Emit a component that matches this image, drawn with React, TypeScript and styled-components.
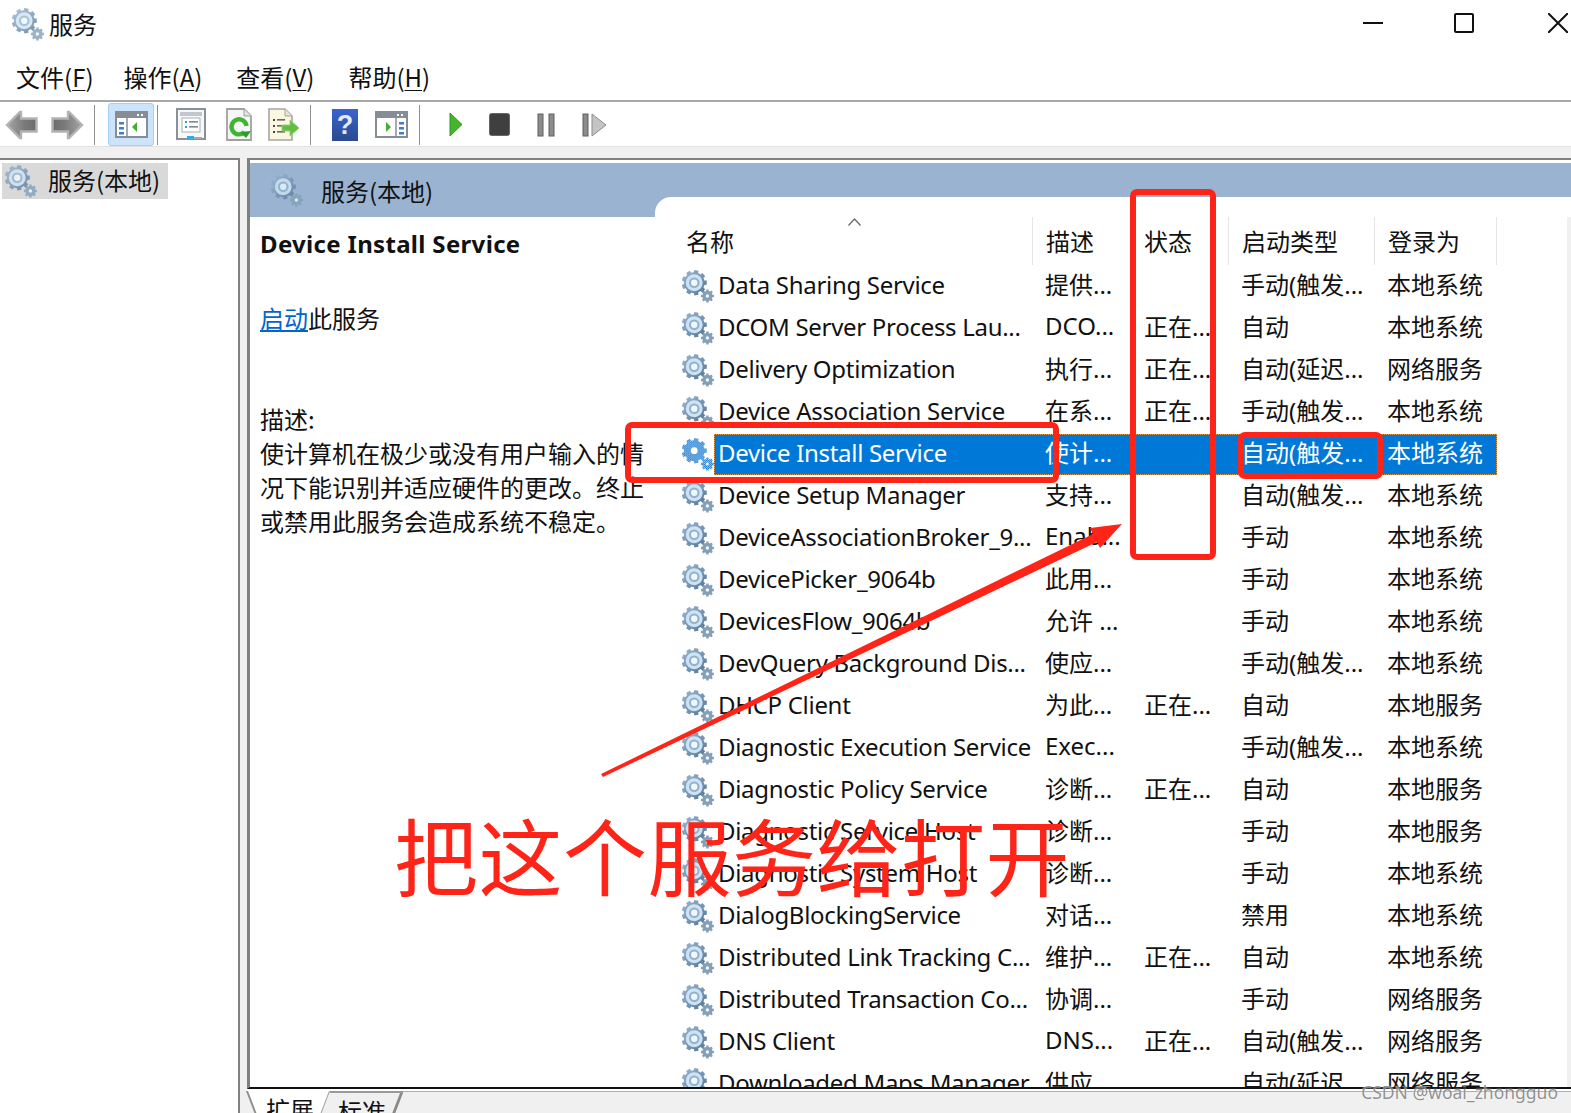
import React from "react";
import styled, { createGlobalStyle } from "styled-components";

const latin = `"Noto Sans", "Noto Sans CJK SC", sans-serif`;
const cjk = `"Noto Sans CJK SC", "Noto Sans", sans-serif`;

const GlobalStyle = createGlobalStyle`
  html, body {
    margin: 0;
    padding: 0;
    background: #fff;
  }
  * {
    box-sizing: border-box;
  }
`;

const Page = styled.div`
  position: relative;
  width: 1571px;
  height: 1113px;
  overflow: hidden;
  display: flex;
  flex-direction: column;
  background: #f0f0f0;
  color: #111;
  font-family: ${cjk};
  font-size: 24px;
`;

const TitleBar = styled.div`
  height: 50px;
  flex-shrink: 0;
  display: flex;
  align-items: center;
  padding: 0 0 2px 12px;
  gap: 5px;
  background: #fff;
`;

const TitleText = styled.span`
  position: relative;
  top: -1px;
`;

const WindowButtons = styled.div`
  margin-left: auto;
  display: flex;
  align-items: center;
  gap: 71px;
  padding: 0 3px 2px 0;

  svg:last-child {
    margin-left: 3px;
  }
`;

const MenuBar = styled.div`
  height: 50px;
  flex-shrink: 0;
  display: flex;
  align-items: center;
  gap: 34px;
  padding: 3px 0 0 16px;
  background: #fff;
`;

const MenuItem = styled.span`
  &:first-child {
    margin-right: -4px;
  }

  u {
    text-underline-offset: 3px;
    text-decoration-thickness: 1px;
  }
`;

const Toolbar = styled.div`
  height: 47px;
  flex-shrink: 0;
  display: flex;
  align-items: center;
  padding-top: 1px;
  background: #fff;
  border-top: 2px solid #a8a8a8;
  border-bottom: 1px solid #e2e2e2;
`;

const ToolSlot = styled.div<{ $ml: number }>`
  margin-left: ${(p) => p.$ml}px;
  display: flex;
  align-items: center;
  flex-shrink: 0;

  svg {
    display: block;
  }
`;

const ToolSep = styled.div<{ $ml: number }>`
  margin-left: ${(p) => p.$ml}px;
  width: 1px;
  height: 40px;
  background: #8f8f8f;
  flex-shrink: 0;
`;

const ActiveTool = styled.div`
  margin-left: 13px;
  width: 46px;
  height: 43px;
  flex-shrink: 0;
  display: flex;
  align-items: center;
  justify-content: center;
  background: #cce4f9;
  border: 1px solid #a5d0f3;
  border-radius: 3px;
`;

const Strip = styled.div`
  height: 11px;
  flex-shrink: 0;
  background: #f0f0f0;
`;

const Body = styled.div`
  flex: 1;
  min-height: 0;
  display: flex;
`;

const TreePane = styled.div`
  width: 240px;
  flex-shrink: 0;
  background: #fff;
  border-top: 2px solid #808080;
  border-right: 2px solid #808080;
  padding: 3px 0 0 2px;
`;

const TreeItem = styled.div`
  width: 166px;
  height: 36px;
  display: flex;
  align-items: center;
  gap: 11px;
  padding-left: 3px;
  background: #d9d9d9;

  span {
    position: relative;
    top: -2px;
  }
`;

const ServicesPanel = styled.div`
  margin-left: 7px;
  flex: 1;
  min-width: 0;
  display: flex;
  flex-direction: column;
`;

const PanelFrame = styled.div`
  flex: 1;
  min-height: 0;
  display: flex;
  background: #fff;
  border-top: 2px solid #808080;
  border-left: 3px solid #808080;
  border-bottom: 2px solid #111;
  padding-top: 3px;
`;

const DescColumn = styled.div`
  width: 405px;
  flex-shrink: 0;
`;

const BlueHead = styled.div`
  height: 54px;
  display: flex;
  align-items: center;
  padding-left: 21px;
  gap: 18px;
  background: #9ab3d1;
`;

const DescBody = styled.div`
  padding: 12px 0 0 10px;
  width: 396px;
`;

const DescTitle = styled.div`
  font-family: ${latin};
  font-weight: 700;
  font-size: 24px;
  letter-spacing: 0.32px;
  line-height: 30px;
  white-space: nowrap;
`;

const DescAction = styled.div`
  margin-top: 42px;
  line-height: 34px;
`;

const StartLink = styled.a`
  color: #0066cc;
  text-decoration: underline;
`;

const DescText = styled.div`
  margin-top: 67px;
  line-height: 34px;
`;

const ListColumn = styled.div`
  flex: 1;
  min-width: 0;
  display: flex;
  flex-direction: column;
  background: #9ab3d1;
  padding-top: 34px;
`;

const ListBody = styled.div`
  flex: 1;
  min-height: 0;
  display: flex;
  overflow: hidden;
  background: #fff;
  border-top-left-radius: 16px;
`;

const Table = styled.div`
  flex: 1;
  min-width: 0;
  padding-top: 20px;
`;

const ScrollEdge = styled.div`
  width: 4px;
  margin-top: 20px;
  background: #f0f0f0;
`;

const HeaderRow = styled.div`
  height: 48px;
  display: flex;
`;

const HeaderCell = styled.div<{ $w: number; $pl: number }>`
  position: relative;
  width: ${(p) => p.$w}px;
  padding-left: ${(p) => p.$pl}px;
  padding-top: 7px;
  line-height: 34px;
  border-right: 1px solid #e5e5e5;
  flex-shrink: 0;
`;

const SortCaret = styled.svg`
  position: absolute;
  left: 193px;
  top: 1px;
`;

const Row = styled.div`
  height: 42px;
  display: flex;
  align-items: center;
  padding-left: 27px;
`;

const GearSlot = styled.div`
  width: 32px;
  height: 34px;
  flex-shrink: 0;
  svg {
    display: block;
  }
`;

const Cells = styled.div<{ $selected?: boolean }>`
  display: grid;
  grid-template-columns: 331px 99px 97px 146px 110px;
  height: 41px;
  align-items: center;
  background: ${(p) => (p.$selected ? "#0078d7" : "transparent")};
  color: ${(p) => (p.$selected ? "#fff" : "#111")};
  outline: ${(p) => (p.$selected ? "1px dotted #e0a050" : "none")};
  outline-offset: -1px;
  white-space: nowrap;
`;

const NameCell = styled.div`
  padding: 0 0 4px 4px;
  font-family: ${latin};
  font-size: 24px;
  letter-spacing: -0.3px;
`;

const Cell = styled.div`
  padding-bottom: 6px;
  font-family: ${latin};
`;

const TabBar = styled.div`
  height: 24px;
  flex-shrink: 0;
  display: flex;
  margin-left: -1px;
  background: #f0f0f0;
  border-top: 2px solid #fff;
`;

const TabRest = styled.div`
  flex: 1;
  border-top: 1px solid #ababab;
`;

const Tab = styled.div<{ $w: number; $pl: number; $active?: boolean }>`
  position: relative;
  width: ${(p) => p.$w}px;
  height: 22px;
  padding-left: ${(p) => p.$pl}px;
  line-height: 36px;
  white-space: nowrap;
  flex-shrink: 0;
  border-top: ${(p) => (p.$active ? "none" : "2px solid #999")};

  &::before {
    content: "";
    position: absolute;
    inset: 0;
    z-index: 0;
    background: ${(p) => (p.$active ? "#fff" : "transparent")};
    clip-path: polygon(0 0, 100% 0, calc(100% - 9px) 100%, 9px 100%);
  }

  &::after {
    content: "";
    position: absolute;
    right: 0;
    top: 0;
    height: 100%;
    border-right: ${(p) => (p.$active ? "1.5px solid #9a9a9a" : "3px solid #8a8a8a")};
    transform: skewX(-21deg);
    transform-origin: top right;
  }
`;

const TabLabel = styled.span`
  position: relative;
`;

const TabLeftEdge = styled.div`
  position: absolute;
  left: 0;
  top: 0;
  height: 100%;
  border-left: 2px solid #8c8c8c;
  transform: skewX(21deg);
  transform-origin: top left;
`;

const Mark = styled.div<{ $x: number; $y: number; $w: number; $h: number }>`
  position: absolute;
  left: ${(p) => p.$x}px;
  top: ${(p) => p.$y}px;
  width: ${(p) => p.$w}px;
  height: ${(p) => p.$h}px;
  border: 6px solid #ff2418;
  border-radius: 7px;
  pointer-events: none;
`;

const ArrowOverlay = styled.svg`
  position: absolute;
  left: 0;
  top: 0;
  pointer-events: none;
`;

const BigNote = styled.div`
  position: absolute;
  left: 394px;
  top: 794px;
  font-family: ${cjk};
  font-size: 84px;
  letter-spacing: 0.5px;
  line-height: 120px;
  color: #ff2418;
  white-space: nowrap;
`;

const Watermark = styled.div`
  position: absolute;
  right: 13px;
  top: 1079px;
  font-family: ${latin};
  font-size: 17.5px;
  line-height: 26px;
  color: rgba(110, 110, 110, 0.75);
  text-shadow: 0 0 2px #fff;
`;

function gearPath(cx: number, cy: number, outer: number, inner: number, teeth: number) {
  const pts: string[] = [];
  const step = (Math.PI * 2) / teeth;
  for (let i = 0; i < teeth; i++) {
    const a = i * step;
    const corners: [number, number][] = [
      [inner, a - step * 0.5],
      [inner, a - step * 0.32],
      [outer, a - step * 0.24],
      [outer, a + step * 0.24],
      [inner, a + step * 0.32],
    ];
    corners.forEach(([r, t]) => {
      pts.push(`${(cx + r * Math.cos(t)).toFixed(2)},${(cy + r * Math.sin(t)).toFixed(2)}`);
    });
  }
  return "M" + pts.join("L") + "Z";
}

const bigGear = gearPath(13, 14.5, 13.5, 11, 9);
const smallGear = gearPath(27, 28.6, 7, 5.4, 8);

let gearCount = 0;

const Gear: React.FC<{ selected?: boolean; faded?: boolean; size?: number }> = ({ selected, faded, size = 32 }) => {
  const id = `gear${gearCount++}`;
  if (selected) {
    return (
      <svg width={size} height={size + 2} viewBox="0 0 34 36">
        <defs>
          <pattern id={id} width="2.2" height="2.2" patternUnits="userSpaceOnUse">
            <rect width="2.2" height="2.2" fill="#1277d0" />
            <rect width="1.1" height="1.1" fill="#a9cdec" />
            <rect x="1.1" y="1.1" width="1.1" height="1.1" fill="#a9cdec" />
          </pattern>
        </defs>
        <path d={bigGear} fill={`url(#${id})`} />
        <path d={smallGear} fill={`url(#${id})`} />
        <circle cx="13" cy="14.5" r="3.6" fill="#fff" />
        <circle cx="27" cy="28.6" r="1.5" fill="#fff" />
      </svg>
    );
  }
  return (
    <svg width={size} height={size + 2} viewBox="0 0 34 36" opacity={faded ? 0.8 : 1}>
      <defs>
        <linearGradient id={id} x1="0" y1="0" x2="1" y2="1">
          <stop offset="0" stopColor="#9db9d3" />
          <stop offset="1" stopColor="#527597" />
        </linearGradient>
      </defs>
      <path d={smallGear} fill="#84a0b8" />
      <circle cx="27" cy="28.6" r="1.8" fill="#f4f8fb" />
      <path d={bigGear} fill={`url(#${id})`} />
      <circle cx="13" cy="14.5" r="9" fill="#cfe2f2" />
      <circle cx="13" cy="14.5" r="5.6" fill="#8db2d3" />
      <circle cx="13" cy="14.5" r="3.4" fill="#f2f7fb" />
    </svg>
  );
};

const MoveArrow: React.FC<{ flip?: boolean }> = ({ flip }) => (
  <svg width="33" height="30" viewBox="0 0 33 30" style={flip ? { transform: "scaleX(-1)" } : undefined}>
    <defs>
      <linearGradient id={flip ? "arrowB" : "arrowA"} x1="0" y1="0" x2="1" y2="0">
        <stop offset="0" stopColor="#a4a4a4" />
        <stop offset="0.6" stopColor="#7a7a7a" />
        <stop offset="1" stopColor="#6c6c6c" />
      </linearGradient>
    </defs>
    <path
      d="M2 15 L15 2 L16 2 L16 8.5 L31.5 8.5 L31.5 21.5 L16 21.5 L16 28 L15 28 Z"
      fill={`url(#${flip ? "arrowB" : "arrowA"})`}
      stroke="#b3b3b3"
      strokeWidth="2.4"
    />
  </svg>
);

const PaneIcon: React.FC<{ right?: boolean }> = ({ right }) => (
  <svg width="33" height="27" viewBox="0 0 33 27">
    <rect x="1" y="1" width="31" height="25" fill="#fff" stroke="#878d96" strokeWidth="2" />
    <rect x="1" y="1" width="31" height="6" fill="#878d96" />
    <rect x="22" y="3" width="2" height="2" fill="#fff" />
    <rect x="26" y="3" width="2" height="2" fill="#fff" />
    <line x1={right ? 21 : 12} y1="7" x2={right ? 21 : 12} y2="26" stroke="#878d96" strokeWidth="1.5" />
    {[11, 16, 21].map((y) => (
      <rect key={y} x={right ? 24 : 4} y={y} width="5" height="2.5" fill="#3f7fc4" />
    ))}
    {right ? (
      <path d="M11 11 L16 16 L11 21 Z" fill="#43ad2f" />
    ) : (
      <path d="M22 11 L17 16 L22 21 Z" fill="#43ad2f" />
    )}
  </svg>
);

const PropsIcon = () => (
  <svg width="30" height="33" viewBox="0 0 30 33">
    <rect x="1" y="1" width="28" height="30" fill="#f7f8f9" stroke="#8b9097" strokeWidth="2" />
    <rect x="4" y="4" width="22" height="4" fill="#c3c7cc" />
    <rect x="6" y="10" width="18" height="14" fill="#fff" stroke="#a9aeb5" />
    <rect x="9" y="13" width="2" height="2" fill="#2f9be0" />
    <rect x="9" y="18" width="2" height="2" fill="#2f9be0" />
    <rect x="13" y="13" width="9" height="1.6" fill="#7f8791" />
    <rect x="13" y="18" width="9" height="1.6" fill="#7f8791" />
    <rect x="11" y="28" width="7" height="4" fill="#28b0ee" />
    <rect x="18" y="29" width="8" height="2" fill="#a5a9af" />
  </svg>
);

const RefreshIcon = () => (
  <svg width="26" height="33" viewBox="0 0 26 33">
    <path d="M1 1 H18 L25 8 V32 H1 Z" fill="#f6f6f6" stroke="#a0a0a0" strokeWidth="1.8" />
    <path d="M18 1 V8 H25" fill="#e2e2e2" stroke="#a0a0a0" strokeWidth="1" />
    <path d="M18.5 24 A7.5 7.5 0 1 1 20.5 18" fill="none" stroke="#3cb52f" strokeWidth="4.4" />
    <path d="M14 24 L25 23 L20 30 Z" fill="#2f9d2a" />
  </svg>
);

const ExportIcon = () => (
  <svg width="32" height="33" viewBox="0 0 32 33">
    <path d="M1 1 H17 L24 8 V32 H1 Z" fill="#fbf7e0" stroke="#a5a5a0" strokeWidth="1.6" />
    <path d="M17 1 V8 H24" fill="#e8e4cf" stroke="#a5a5a0" />
    {[11, 17, 23].map((y) => (
      <g key={y}>
        <rect x="5" y={y} width="2" height="2" fill="#444" />
        <rect x="9" y={y} width="8" height="1.6" fill="#666" />
      </g>
    ))}
    <path d="M14 17 H22 V12 L31 20 L22 28 V23 H14 Z" fill="#62bd40" stroke="#8fd275" strokeWidth="1" />
  </svg>
);

const HelpIcon = () => (
  <svg width="26" height="32" viewBox="0 0 26 32">
    <defs>
      <linearGradient id="helpFill" x1="0" y1="0" x2="0" y2="1">
        <stop offset="0" stopColor="#3a63d0" />
        <stop offset="1" stopColor="#2b4a8e" />
      </linearGradient>
    </defs>
    <rect width="26" height="32" fill="url(#helpFill)" />
    <text x="13" y="25" textAnchor="middle" fontFamily="Liberation Sans, sans-serif" fontWeight="700" fontSize="27" fill="#e6eaf5">
      ?
    </text>
  </svg>
);

const PlayIcon = () => (
  <svg width="14" height="25" viewBox="0 0 14 25">
    <path d="M1 1 L13 12.5 L1 24 Z" fill="#45b52d" stroke="#2f9a1e" />
  </svg>
);

const StopIcon = () => (
  <svg width="21" height="23" viewBox="0 0 21 23">
    <rect x="0.5" y="0.5" width="20" height="22" rx="2" fill="#3f3f3f" stroke="#666" />
  </svg>
);

const PauseIcon = () => (
  <svg width="18" height="24" viewBox="0 0 18 24">
    <rect x="1" y="1" width="5" height="22" fill="#8c8c8c" stroke="#5f5f5f" />
    <rect x="12" y="1" width="5" height="22" fill="#8c8c8c" stroke="#5f5f5f" />
  </svg>
);

const StepIcon = () => (
  <svg width="25" height="24" viewBox="0 0 25 24">
    <rect x="1" y="1" width="5" height="22" fill="#8c8c8c" stroke="#5f5f5f" />
    <path d="M10 1 L24 12 L10 23 Z" fill="#c4c4c4" stroke="#8c8c8c" />
  </svg>
);

type Service = { name: string; desc: string; status: string; start: string; logon: string; selected?: boolean };

const services: Service[] = [
  { name: "Data Sharing Service", desc: "提供...", status: "", start: "手动(触发...", logon: "本地系统" },
  { name: "DCOM Server Process Lau...", desc: "DCO...", status: "正在...", start: "自动", logon: "本地系统" },
  { name: "Delivery Optimization", desc: "执行...", status: "正在...", start: "自动(延迟...", logon: "网络服务" },
  { name: "Device Association Service", desc: "在系...", status: "正在...", start: "手动(触发...", logon: "本地系统" },
  { name: "Device Install Service", desc: "使计...", status: "", start: "自动(触发...", logon: "本地系统", selected: true },
  { name: "Device Setup Manager", desc: "支持...", status: "", start: "自动(触发...", logon: "本地系统" },
  { name: "DeviceAssociationBroker_9...", desc: "Enab...", status: "", start: "手动", logon: "本地系统" },
  { name: "DevicePicker_9064b", desc: "此用...", status: "", start: "手动", logon: "本地系统" },
  { name: "DevicesFlow_9064b", desc: "允许 ...", status: "", start: "手动", logon: "本地系统" },
  { name: "DevQuery Background Dis...", desc: "使应...", status: "", start: "手动(触发...", logon: "本地系统" },
  { name: "DHCP Client", desc: "为此...", status: "正在...", start: "自动", logon: "本地服务" },
  { name: "Diagnostic Execution Service", desc: "Exec...", status: "", start: "手动(触发...", logon: "本地系统" },
  { name: "Diagnostic Policy Service", desc: "诊断...", status: "正在...", start: "自动", logon: "本地服务" },
  { name: "Diagnostic Service Host", desc: "诊断...", status: "", start: "手动", logon: "本地服务" },
  { name: "Diagnostic System Host", desc: "诊断...", status: "", start: "手动", logon: "本地系统" },
  { name: "DialogBlockingService", desc: "对话...", status: "", start: "禁用", logon: "本地系统" },
  { name: "Distributed Link Tracking C...", desc: "维护...", status: "正在...", start: "自动", logon: "本地系统" },
  { name: "Distributed Transaction Co...", desc: "协调...", status: "", start: "手动", logon: "网络服务" },
  { name: "DNS Client", desc: "DNS...", status: "正在...", start: "自动(触发...", logon: "网络服务" },
  { name: "Downloaded Maps Manager", desc: "供应...", status: "", start: "自动(延迟...", logon: "网络服务" },
];

const App: React.FC = () => {
  return (
    <Page>
      <GlobalStyle />
      <TitleBar>
        <Gear faded />
        <TitleText>服务</TitleText>
        <WindowButtons>
          <svg width="20" height="20" viewBox="0 0 20 20">
            <line x1="0" y1="10" x2="20" y2="10" stroke="#111" strokeWidth="2" />
          </svg>
          <svg width="20" height="20" viewBox="0 0 20 20">
            <rect x="1" y="1" width="18" height="18" rx="1" fill="none" stroke="#111" strokeWidth="2" />
          </svg>
          <svg width="20" height="20" viewBox="0 0 20 20">
            <path d="M0 0 L20 20 M20 0 L0 20" stroke="#111" strokeWidth="2" />
          </svg>
        </WindowButtons>
      </TitleBar>

      <MenuBar>
        <MenuItem>文件(<u>F</u>)</MenuItem>
        <MenuItem>操作(<u>A</u>)</MenuItem>
        <MenuItem>查看(<u>V</u>)</MenuItem>
        <MenuItem>帮助(<u>H</u>)</MenuItem>
      </MenuBar>

      <Toolbar>
        <ToolSlot $ml={5}><MoveArrow /></ToolSlot>
        <ToolSlot $ml={13}><MoveArrow flip /></ToolSlot>
        <ToolSep $ml={10} />
        <ActiveTool><PaneIcon /></ActiveTool>
        <ToolSep $ml={3} />
        <ToolSlot $ml={18}><PropsIcon /></ToolSlot>
        <ToolSlot $ml={20}><RefreshIcon /></ToolSlot>
        <ToolSlot $ml={16}><ExportIcon /></ToolSlot>
        <ToolSep $ml={10} />
        <ToolSlot $ml={21}><HelpIcon /></ToolSlot>
        <ToolSlot $ml={17}><PaneIcon right /></ToolSlot>
        <ToolSep $ml={11} />
        <ToolSlot $ml={29}><PlayIcon /></ToolSlot>
        <ToolSlot $ml={26}><StopIcon /></ToolSlot>
        <ToolSlot $ml={27}><PauseIcon /></ToolSlot>
        <ToolSlot $ml={27}><StepIcon /></ToolSlot>
      </Toolbar>

      <Strip />

      <Body>
        <TreePane>
          <TreeItem>
            <Gear faded size={32} />
            <span>服务(本地)</span>
          </TreeItem>
        </TreePane>

        <ServicesPanel>
          <PanelFrame>
            <DescColumn>
              <BlueHead>
                <Gear faded size={32} />
                <span>服务(本地)</span>
              </BlueHead>
              <DescBody>
                <DescTitle>Device Install Service</DescTitle>
                <DescAction>
                  <StartLink>启动</StartLink>此服务
                </DescAction>
                <DescText>
                  描述:
                  <br />
                  使计算机在极少或没有用户输入的情况下能识别并适应硬件的更改。终止或禁用此服务会造成系统不稳定。
                </DescText>
              </DescBody>
            </DescColumn>

            <ListColumn>
              <ListBody>
                <Table>
                  <HeaderRow>
                    <HeaderCell $w={378} $pl={31}>
                      <SortCaret width="13" height="8" viewBox="0 0 13 8">
                        <path d="M0.5 7.5 L6.5 1 L12.5 7.5" fill="none" stroke="#666" strokeWidth="1.2" />
                      </SortCaret>
                      名称
                    </HeaderCell>
                    <HeaderCell $w={98} $pl={13}>描述</HeaderCell>
                    <HeaderCell $w={98} $pl={13}>状态</HeaderCell>
                    <HeaderCell $w={146} $pl={13}>启动类型</HeaderCell>
                    <HeaderCell $w={122} $pl={13}>登录为</HeaderCell>
                  </HeaderRow>
                  {services.map((s) => (
                    <Row key={s.name}>
                      <GearSlot>
                        <Gear selected={s.selected} />
                      </GearSlot>
                      <Cells $selected={s.selected}>
                        <NameCell>{s.name}</NameCell>
                        <Cell>{s.desc}</Cell>
                        <Cell>{s.status}</Cell>
                        <Cell>{s.start}</Cell>
                        <Cell>{s.logon}</Cell>
                      </Cells>
                    </Row>
                  ))}
                </Table>
                <ScrollEdge />
              </ListBody>
            </ListColumn>
          </PanelFrame>

          <TabBar>
            <Tab $w={84} $pl={20} $active>
              <TabLeftEdge />
              <TabLabel>扩展</TabLabel>
            </Tab>
            <Tab $w={73} $pl={8}>
              <TabLabel>标准</TabLabel>
            </Tab>
            <TabRest />
          </TabBar>
        </ServicesPanel>
      </Body>

      <Mark $x={1130} $y={189} $w={86} $h={371} />
      <Mark $x={625} $y={422} $w={434} $h={61} />
      <Mark $x={1238} $y={432} $w={145} $h={47} />

      <ArrowOverlay width="1571" height="1113" viewBox="0 0 1571 1113">
        <polygon points="601,774 1093,534 1090,528 1122,524 1100,548 1097,542 603,777" fill="#ff2418" />
      </ArrowOverlay>

      <BigNote>把这个服务给打开</BigNote>
      <Watermark>CSDN @woai_zhongguo</Watermark>
    </Page>
  );
};

export default App;
